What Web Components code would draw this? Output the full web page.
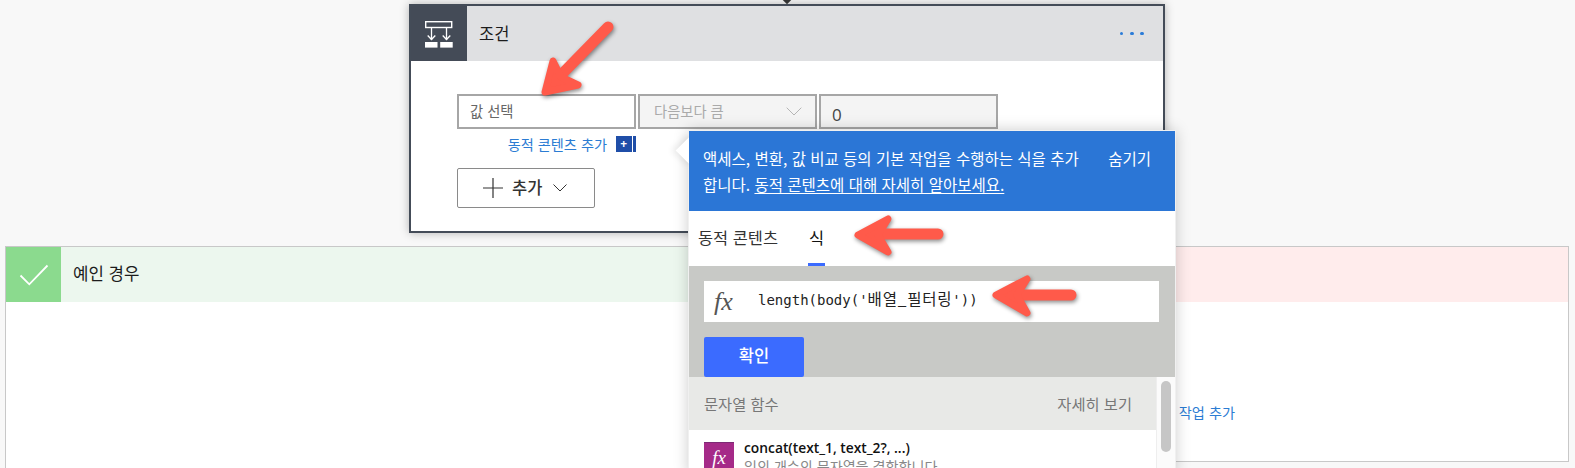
<!DOCTYPE html>
<html lang="ko">
<head>
<meta charset="utf-8">
<title>조건</title>
<style>
html,body{margin:0;padding:0;background:#f8f8f8;overflow:hidden}
body{font-family:"Noto Sans CJK KR","Open Sans",sans-serif;color:#222}
</style>
</head>
<body>
<flow-canvas>
  <condition-card title-text="조건"></condition-card>
  <branch-row>
    <branch-box kind="yes" label="예인 경우"></branch-box>
    <branch-box kind="no" action="작업 추가"></branch-box>
  </branch-row>
  <expr-popup></expr-popup>
  <callout-arrows></callout-arrows>
</flow-canvas>
<script>
function define(name, html, init){
  customElements.define(name, class extends HTMLElement{
    constructor(){
      super();
      const r=this.attachShadow({mode:'open'});
      r.innerHTML=typeof html==='function'?html(this):html;
    }
    connectedCallback(){
      const r=this.shadowRoot;
      if(init&&!this._d){this._d=1;init(this,r);}
    }
  });
}
const FONT='"Noto Sans CJK KR","Open Sans",sans-serif';

define('flow-canvas',`<style>
:host{display:block;position:relative;width:1575px;height:468px;overflow:hidden;background:#f8f8f8;font-family:${FONT};box-sizing:border-box;padding-top:4px}
.pin{position:absolute;left:784px;top:-3px;width:6px;height:6px;background:#333;transform:rotate(45deg);z-index:1}
</style><div class="pin"></div><slot></slot>`);

define('condition-card',`<style>
:host{display:block;box-sizing:border-box;width:756px;height:229px;margin-left:409px;border:2px solid #444c58;background:#fff;box-shadow:0 0 9px rgba(0,0,0,.28);position:relative}
.head{display:flex;align-items:center;height:55px;background:#dfe0e2}
.tile{width:56px;height:55px;background:#444b57;display:flex;align-items:center;justify-content:center;flex:none}
.title{margin-left:12px;font-size:16.500px;color:#1c1c1c;flex:1;padding-bottom:2px}
.more{display:flex;gap:6.800px;margin-right:19px}
.more i{width:3.600px;height:3.600px;border-radius:50%;background:#2b7cd8}
.body{padding:33px 0 0 46px}
.fields{display:grid;grid-template-columns:178.500px 178.500px 178.500px;column-gap:2.500px;height:35px}
.f{box-sizing:border-box;border:2px solid #a6a6a6;font-size:14.300px;display:flex;align-items:center;padding:0 0 3px 11px;color:#666}
.f.dis{background:#f4f4f4;color:#aaa;justify-content:space-between;padding:0 13px 0 14px}
.f.dis span{padding-bottom:2px}
.f.zero{background:#f4f4f4;color:#444;font-size:17px;padding:6px 0 0 11px;font-family:"Open Sans",sans-serif}
.link{display:flex;align-items:center;height:23px;margin-top:3px;width:179px;justify-content:flex-end;gap:9px;color:#2b7cd3;font-size:14.200px;box-sizing:border-box}
.plus{display:flex;gap:1px;height:16px}
.plus b{background:#1f4ea8;color:#fff;width:15.500px;height:16px;display:flex;align-items:center;justify-content:center;font-size:12px;line-height:1;font-weight:700;font-family:"Open Sans",sans-serif}
.plus i{background:#1f4ea8;width:3.500px}
.add{box-sizing:border-box;margin-top:13px;width:138px;height:40px;border:1px solid #8a8a8a;border-radius:2px;display:flex;align-items:center;padding-left:25px;font-size:16.500px;color:#333;font-weight:500}
.add span{margin:0 11px 0 9px;padding-bottom:2px}
</style>
<div class="head">
  <div class="tile"><svg width="30" height="30" viewBox="0 0 30 30" fill="none">
    <rect x="1.700" y="2.700" width="26" height="5.800" stroke="#fff" stroke-width="1.400"/>
    <path d="M7.500 9v12M22.500 9v12" stroke="#fff" stroke-width="1.300"/>
    <path d="M3.700 16.500l3.800 4 3.800-4M18.700 16.500l3.800 4 3.800-4" stroke="#fff" stroke-width="1.300"/>
    <rect x="1" y="23" width="12.500" height="5.600" fill="#fff"/><rect x="16.200" y="23" width="12.500" height="5.600" fill="#fff"/>
  </svg></div>
  <div class="title">조건</div>
  <div class="more"><i></i><i></i><i></i></div>
</div>
<div class="body">
  <div class="fields">
    <div class="f">값 선택</div>
    <div class="f dis"><span>다음보다 큼</span><svg width="16" height="9" viewBox="0 0 16 9" fill="none"><path d="M.7.7L8 8l7.300-7.300" stroke="#b5b5b5" stroke-width="1"/></svg></div>
    <div class="f zero">0</div>
  </div>
  <div class="link"><span>동적 콘텐츠 추가</span><div class="plus"><b>+</b><i></i></div></div>
  <div class="add"><svg width="20" height="20" viewBox="0 0 20 20"><path d="M10 0v20M0 10h20" stroke="#333" stroke-width="1.200"/></svg><span>추가</span><svg width="14" height="8" viewBox="0 0 14 8" fill="none"><path d="M.5.5L7 7l6.500-6.500" stroke="#333" stroke-width="1"/></svg></div>
</div>`,
(el,r)=>{r.querySelector('.title').textContent=el.getAttribute('title-text');});

define('branch-row',`<style>
:host{display:flex;justify-content:space-between;margin-top:13px;padding:0 6px 0 5px;width:1575px;box-sizing:border-box;align-items:flex-start}
</style><slot></slot>`);

define('branch-box',el=>{
  const yes=el.getAttribute('kind')==='yes';
  return `<style>
:host{display:block;box-sizing:border-box;background:#fff;border:1.500px solid #c8c8c8;width:770px;height:${yes?'240px':'216px'}}
.h{display:flex;align-items:center;height:55px;background:${yes?'#ecf7ee':'#ffecec'}}
.t{width:55px;height:55px;background:#8bda8e;display:flex;align-items:center;justify-content:center;flex:none}
.l{margin-left:12px;font-size:16.800px;color:#1c1c1c;padding-bottom:3px}
.b{display:flex;justify-content:flex-end;padding:100px 333px 0 0;font-size:14.200px;color:#2b7cd3}
</style>
<div class="h">${yes?`<div class="t"><svg width="30" height="22" viewBox="0 0 30 22" fill="none"><path d="M1.500 11.500L10.300 20.300 28.500 1.500" stroke="#fff" stroke-width="1.800"/></svg></div><div class="l">${el.getAttribute('label')}</div>`:''}</div>
${yes?'':`<div class="b">${el.getAttribute('action')}</div>`}`;
});

define('expr-popup',`<style>
:host{position:absolute;left:688px;top:130px;width:488px;height:345px;box-sizing:border-box;border:1px solid #f0f0f0;border-width:1px 1px 0 1px;background:#fff;box-shadow:0 0 14px rgba(0,0,0,.2);display:block;color:#222}
.beak{position:absolute;left:-9px;top:9px;width:21px;height:21px;background:#fff;transform:rotate(45deg);box-shadow:-3px 3px 6px rgba(0,0,0,.08)}
.banner{position:relative;display:flex;justify-content:space-between;box-sizing:border-box;height:80px;background:#2b76d6;color:#fff;font-size:15.500px;line-height:26px;padding:14px 24px 0 14px}
.banner a{color:#fff;text-decoration:underline;text-underline-offset:2px}
.tabs{display:flex;height:55px;gap:30px;padding-left:9px;font-size:16.400px;color:#333;position:relative;background:#fff}
.tab{height:55px;box-sizing:border-box;padding-top:14px;line-height:24px}
.tab.on{color:#111;border-bottom:3px solid #3b6bff;padding:14px 1px 0}
.grey{background:#c8c9c6;height:111px;box-sizing:border-box;padding:15px 16px 0 15px}
.in{display:flex;align-items:center;background:#fff;height:41px;margin-right:0;padding-left:10px}
.fx{font-family:"Liberation Serif",serif;font-style:italic;font-size:26px;color:#555;width:44px;line-height:1}
.mono{font-family:"DejaVu Sans Mono","Noto Sans CJK KR",monospace;font-size:14px;color:#222;padding-bottom:7px}
.mono span{font-family:"Noto Sans CJK KR",sans-serif;font-size:15.500px;letter-spacing:.8px}
.ok{margin-top:15px;width:100px;height:40px;border-radius:2px;background:#3b6bff;color:#fff;font-size:16.500px;display:flex;align-items:center;justify-content:center;font-weight:500;box-sizing:border-box;padding-bottom:5px}
.list{display:grid;grid-template-columns:1fr 19px;background:#fff;height:120px}
.lh{display:flex;justify-content:space-between;align-items:center;height:53px;background:#e8e9e7;padding:0 24px 2px 15px;font-size:15.300px;color:#777;box-sizing:border-box}
.it{display:flex;gap:10px;padding:12px 0 0 15px}
.ic{width:30px;height:30px;background:#a52a88;color:#fff;font-family:"Liberation Serif",serif;font-style:italic;font-size:19px;display:flex;align-items:center;justify-content:center;flex:none;border-top:1px solid #7d2a75;box-sizing:border-box}
.n{font-family:"Open Sans",sans-serif;font-weight:600;font-size:13.800px;color:#111;line-height:16px;margin-top:-2px}
.d{font-size:14.100px;color:#888;line-height:18px;margin-top:1px}
.track{background:#fbfbfb;border-left:1px solid #eee;padding:4px 4px 0 4px;box-sizing:border-box}
.thumb{width:10px;height:71px;border-radius:5px;background:#c6c6c6}
</style>
<div class="beak"></div>
<div class="banner"><div>액세스, 변환, 값 비교 등의 기본 작업을 수행하는 식을 추가<br>합니다. <a>동적 콘텐츠에 대해 자세히 알아보세요.</a></div><div>숨기기</div></div>
<div class="tabs"><div class="tab">동적 콘텐츠</div><div class="tab on">식</div></div>
<div class="grey">
  <div class="in"><span class="fx">fx</span><span class="mono">length(body('<span>배열_필터링</span>'))</span></div>
  <div class="ok">확인</div>
</div>
<div class="list">
  <div>
    <div class="lh"><span>문자열 함수</span><span>자세히 보기</span></div>
    <div class="it"><div class="ic">fx</div><div><div class="n">concat(text_1, text_2?, ...)</div><div class="d">임의 개수의 문자열을 결합합니다</div></div></div>
  </div>
  <div class="track"><div class="thumb"></div></div>
</div>`);

define('callout-arrows',`<style>
:host{position:absolute;left:0;top:0;width:1575px;height:468px;pointer-events:none;display:block}
svg{display:block;filter:drop-shadow(1px 2px 2px rgba(0,0,0,.45))}
.s{stroke:#ff5a4a;stroke-linecap:round;stroke-linejoin:round;fill:#ff5a4a}
</style>
<svg width="1575" height="468" viewBox="0 0 1575 468">
  <g class="s"><path d="M608 27L560 76" stroke-width="11" fill="none"/><path d="M545 92L553 61 561 77 578 85Z" stroke-width="7"/></g>
  <g class="s"><path d="M938 234H876" stroke-width="11" fill="none"/><path d="M858 235L888 219 878 235 888 252Z" stroke-width="7"/></g>
  <g class="s"><path d="M1071 295H1015" stroke-width="11" fill="none"/><path d="M996 295L1027 279 1017 295 1027 313Z" stroke-width="7"/></g>
</svg>`);

</script>
</body>
</html>
